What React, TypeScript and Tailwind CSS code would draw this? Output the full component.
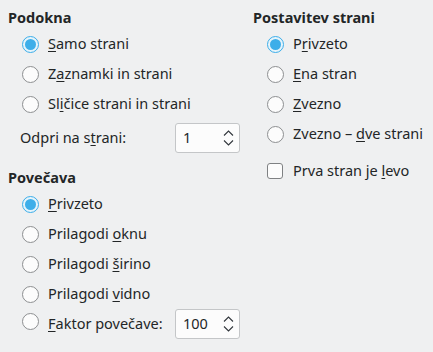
function Radio({ checked, children }: { checked?: boolean; children: React.ReactNode }) {
  return (
    <div className="flex h-[30px] items-center">
      <span
        className={
          checked
            ? "flex h-[17px] w-[17px] items-center justify-center rounded-full border border-[#3daee9] bg-[#e6f4fb]"
            : "h-[17px] w-[17px] rounded-full border border-[#8d8f91] bg-[#fcfcfc]"
        }
      >
        {checked && <span className="h-[11px] w-[11px] rounded-full bg-[#3daee9]" />}
      </span>
      <span className="ml-[9px]">{children}</span>
    </div>
  );
}

function Spin({ value }: { value: string }) {
  return (
    <div className="flex h-[30px] w-[65px] items-center justify-between rounded-[3px] border border-[#c4c6c8] bg-[#fcfcfc] pl-[7px] pr-[5px]">
      <span>{value}</span>
      <svg width="11" height="18" viewBox="0 0 11 18" fill="none" stroke="#31363b" strokeWidth="1.1">
        <polyline points="1,6.5 5.5,2 10,6.5" />
        <polyline points="1,11.5 5.5,16 10,11.5" />
      </svg>
    </div>
  );
}

const U = ({ children }: { children: React.ReactNode }) => <span className="underline underline-offset-2">{children}</span>;

export default function App() {
  return (
    <div
      className="flex h-[352px] w-[433px] bg-[#eff0f1] text-[14.5px] text-[#232627]"
      style={{ fontFamily: '"Noto Sans", sans-serif' }}
    >
      <div className="flex w-[245px] flex-col pl-[8px] pt-[7px]">
        <div className="flex h-[22px] items-center font-bold">Podokna</div>
        <div className="flex flex-col pl-[14px]">
          <Radio checked>
            <U>S</U>amo strani
          </Radio>
          <Radio>
            Z<U>a</U>znamki in strani
          </Radio>
          <Radio>
            Sl<U>i</U>čice strani in strani
          </Radio>
        </div>
        <div className="mt-[4px] flex h-[30px] items-center pl-[12px]">
          <span className="w-[155px]">
            Odpri na s<U>t</U>rani:
          </span>
          <Spin value="1" />
        </div>
        <div className="mt-[13px] flex h-[23px] items-center font-bold">Povečava</div>
        <div className="flex flex-col pl-[14px]">
          <Radio checked>
            <U>P</U>rivzeto
          </Radio>
          <Radio>
            Prilagodi <U>o</U>knu
          </Radio>
          <Radio>
            Prilagodi <U>š</U>irino
          </Radio>
          <Radio>
            Prilagodi <U>v</U>idno
          </Radio>
          <div className="flex h-[30px] items-center">
            <span className="-mt-[5px] h-[17px] w-[17px] rounded-full border border-[#8d8f91] bg-[#fcfcfc]" />
            <span className="ml-[9px] w-[127px]">
              <U>F</U>aktor povečave:
            </span>
            <Spin value="100" />
          </div>
        </div>
      </div>
      <div className="flex flex-col pl-[8px] pt-[7px]">
        <div className="flex h-[22px] items-center font-bold">Postavitev strani</div>
        <div className="flex flex-col pl-[14px]">
          <Radio checked>
            P<U>r</U>ivzeto
          </Radio>
          <Radio>
            <U>E</U>na stran
          </Radio>
          <Radio>
            <U>Z</U>vezno
          </Radio>
          <Radio>
            Zvezno – <U>d</U>ve strani
          </Radio>
          <div className="mt-[7px] flex h-[30px] items-center">
            <span className="h-[16px] w-[16px] rounded-[3px] border border-[#7f8183] bg-[#fcfcfc]" />
            <span className="ml-[10px]">
              Prva stran je <U>l</U>evo
            </span>
          </div>
        </div>
      </div>
    </div>
  );
}
